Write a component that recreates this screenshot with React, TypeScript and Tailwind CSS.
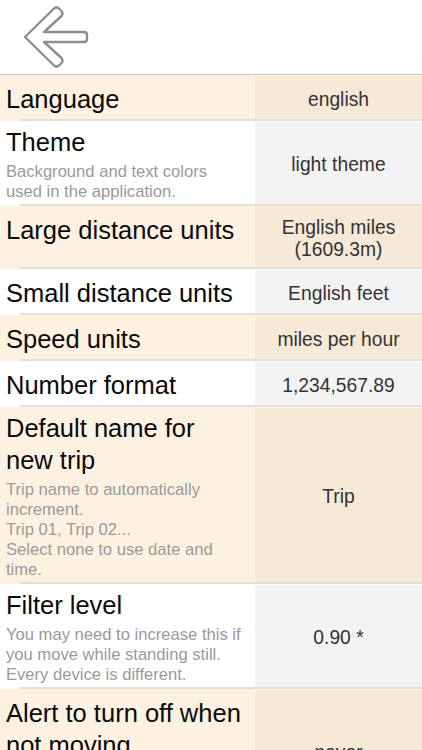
import React from "react";

type Row = {
  title: string[];
  sub?: string[];
  value: string[];
  minH?: string;
};

const rows: Row[] = [
  { title: ["Language"], value: ["english"] },
  {
    title: ["Theme"],
    sub: ["Background and text colors", "used in the application."],
    value: ["light theme"],
  },
  { title: ["Large distance units"], value: ["English miles", "(1609.3m)"] },
  { title: ["Small distance units"], value: ["English feet"] },
  { title: ["Speed units"], value: ["miles per hour"] },
  { title: ["Number format"], value: ["1,234,567.89"] },
  {
    title: ["Default name for", "new trip"],
    sub: [
      "Trip name to automatically",
      "increment.",
      "Trip 01, Trip 02...",
      "Select none to use date and",
      "time.",
    ],
    value: ["Trip"],
  },
  {
    title: ["Filter level"],
    sub: [
      "You may need to increase this if",
      "you move while standing still.",
      "Every device is different.",
    ],
    value: ["0.90 *"],
  },
  {
    title: ["Alert to turn off when", "not moving"],
    value: ["never"],
    minH: "min-h-[122px]",
  },
];

function BackArrow() {
  return (
    <svg width="70" height="66" viewBox="0 0 70 66" className="block">
      <path
        d="M2 31 L31 2.5 Q33.5 0.5 36 2.5 L38.5 5 Q40.5 7.5 38.5 10 L21 26 L61 26 Q64 26 64 29 L64 33 Q64 36 61 36 L21 36 L38.5 52 Q40.5 54.5 38.5 57 L36 59.5 Q33.5 61.5 31 59.5 L2 31 Z"
        fill="#ffffff"
        stroke="#8e8e8e"
        strokeWidth="2.4"
        strokeLinejoin="round"
      />
    </svg>
  );
}

export default function App() {
  return (
    <div
      className="w-[422px] h-[750px] overflow-hidden bg-white"
      style={{ fontFamily: '"Liberation Sans", Arial, sans-serif' }}
    >
      <div className="h-[74px] flex items-start pl-[23px] pt-[6px]">
        <BackArrow />
      </div>
      <div className="h-[1px] bg-[#c9c6c1]" />
      {rows.map((r, i) => {
        const cream = i % 2 === 0;
        const hasSub = !!r.sub;
        return (
          <div key={i} className={cream ? "bg-[#fdf2e1]" : "bg-white"}>
            <div className={`flex ${r.minH ?? ""}`}>
              <div
                className={`flex-1 pl-[6px] pr-1 ${
                  hasSub ? "pt-[5px] pb-[2px]" : "pt-[8px] pb-[4px]"
                }`}
              >
                <div className="text-[25.5px] leading-[32px] text-[#0a0a0a]">
                  {r.title.map((t, j) => (
                    <div key={j} className="whitespace-nowrap">{t}</div>
                  ))}
                </div>
                {r.sub && (
                  <div className="mt-[4px] text-[16.6px] leading-[20px] text-[#9a9a9a]">
                    {r.sub.map((t, j) => (
                      <div key={j} className="whitespace-nowrap">{t}</div>
                    ))}
                  </div>
                )}
              </div>
              <div
                className={`w-[167px] shrink-0 mt-[1px] flex flex-col items-center justify-center text-center pt-[10px] pb-[6px] text-[19.3px] leading-[22px] text-[#333333] ${
                  cream ? "bg-[#f6e9d7]" : "bg-[#f3f3f3]"
                }`}
              >
                {r.value.map((t, j) => (
                  <div key={j} className="whitespace-nowrap">{t}</div>
                ))}
              </div>
            </div>
            <div className="ml-[20px] h-[2px] bg-[#e4dfd8]" />
          </div>
        );
      })}
    </div>
  );
}
